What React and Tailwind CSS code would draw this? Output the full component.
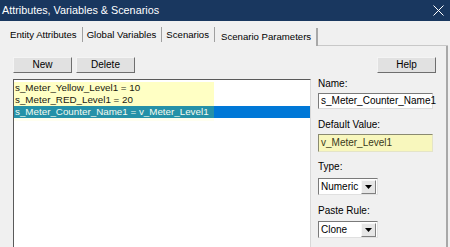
import React from "react";

const tabs = ["Entity Attributes", "Global Variables", "Scenarios"];

const params = [
  { text: "s_Meter_Yellow_Level1 = 10" },
  { text: "s_Meter_RED_Level1 = 20" },
  { text: "s_Meter_Counter_Name1 = v_Meter_Level1", selected: true },
];

const Button = ({ children, className = "" }) => (
  <button
    className={`h-[16px] bg-[#e1e1e1] border border-t-[#f4f4f4] border-l-[#f4f4f4] border-r-[#6e6e6e] border-b-[#6e6e6e] text-[10px] leading-none text-black ${className}`}
  >
    {children}
  </button>
);

const Select = ({ value }) => (
  <div className="w-[60px] h-[17px] flex items-center bg-white border border-t-[#7a7a7a] border-l-[#7a7a7a] border-r-[#e0e0e0] border-b-[#e0e0e0]">
    <span className="flex-1 pl-[2px] text-[10px] leading-none">{value}</span>
    <span className="w-[15px] h-[14px] mr-[1px] flex items-center justify-center bg-[#e6e6e6] border border-t-[#f8f8f8] border-l-[#f8f8f8] border-r-[#808080] border-b-[#808080]">
      <svg width="7" height="4" viewBox="0 0 7 4">
        <path d="M0 0h7L3.5 4z" fill="#000" />
      </svg>
    </span>
  </div>
);

export default function App() {
  return (
    <div
      className="w-[450px] h-[247px] overflow-hidden bg-[#f0f0f0] text-black flex flex-col"
      style={{ fontFamily: '"Liberation Sans", Arial, sans-serif' }}
    >
      {/* title bar */}
      <div className="h-[21px] shrink-0 bg-[#19375f] flex items-center justify-between pl-[2px] pr-[6px] text-white">
        <span className="text-[10.8px] leading-none">Attributes, Variables &amp; Scenarios</span>
        <svg width="11" height="11" viewBox="0 0 11 11">
          <path d="M0.5 0.5l10 10M10.5 0.5l-10 10" stroke="#fff" strokeWidth="1" />
        </svg>
      </div>

      {/* tabs */}
      <div className="h-[25px] shrink-0 flex items-end pl-[6px]">
        {tabs.map((t) => (
          <div key={t} className="h-[17px] flex items-center mb-[3px]">
            <span className="px-[4px] text-[9.6px] leading-none">{t}</span>
            <span className="w-px h-[15px] bg-[#a0a0a0] ml-[1px]" />
          </div>
        ))}
        <div className="h-[18px] flex items-center px-[5px] border-r-2 border-r-[#a8a8a8] ml-[1px]">
          <span className="text-[9.6px] leading-none">Scenario Parameters</span>
        </div>
        <div className="flex-1 self-stretch border-b border-[#c8c8c8] mr-[2px]" />
      </div>

      {/* tab panel */}
      <div className="flex-1 flex flex-col pt-[11px] pl-[13px] pr-[13px] mr-[2px] border-r-2 border-r-[#a8a8a8] min-h-0">
        <div className="flex items-center">
          <Button className="w-[59px]">New</Button>
          <Button className="w-[59px] ml-[4px]">Delete</Button>
          <div className="flex-1" />
          <Button className="w-[59px] mr-[-3px]">Help</Button>
        </div>

        <div className="flex flex-1 mt-[6px] min-h-0">
          {/* list box */}
          <div className="w-[304px] bg-white border border-t-[#5a5a5a] border-l-[#5a5a5a] border-r-[#d8d8d8] border-b-0 pt-[2px] text-[9.8px] leading-[12px]">
            {params.map((p) => (
              <div key={p.text} className={`flex h-[12px] ${p.selected ? "bg-[#0078d7]" : ""}`}>
                <div
                  className={`w-[200px] pl-[1px] whitespace-nowrap ${
                    p.selected ? "bg-[#2591a8] text-[#f4fbf0]" : "bg-[#ffffc4] text-[#1a1a10]"
                  }`}
                >
                  {p.text}
                </div>
              </div>
            ))}
            <div className="w-[200px] h-[3px] bg-[#fffff0]" />
          </div>

          {/* right column */}
          <div className="flex flex-col ml-[7px] w-[115px] text-[10px] leading-none">
            <span className="h-[11px]">Name:</span>
            <div className="mt-[3px] h-[16px] flex items-center bg-white border border-t-[#7a7a7a] border-l-[#7a7a7a] border-r-[#dcdcdc] border-b-[#dcdcdc] pl-[2px]">
              s_Meter_Counter_Name1
            </div>
            <span className="mt-[11px] h-[11px]">Default Value:</span>
            <div className="mt-[3px] h-[18px] flex items-center bg-[#f8f7bd] border border-t-[#8a8a70] border-l-[#8a8a70] border-r-[#e4e4c8] border-b-[#e4e4c8] pl-[2px] text-[#3a3a20]">
              v_Meter_Level1
            </div>
            <span className="mt-[10px] h-[11px]">Type:</span>
            <div className="mt-[5px]">
              <Select value="Numeric" />
            </div>
            <span className="mt-[11px] h-[11px]">Paste Rule:</span>
            <div className="mt-[4px]">
              <Select value="Clone" />
            </div>
          </div>
        </div>
      </div>
    </div>
  );
}
